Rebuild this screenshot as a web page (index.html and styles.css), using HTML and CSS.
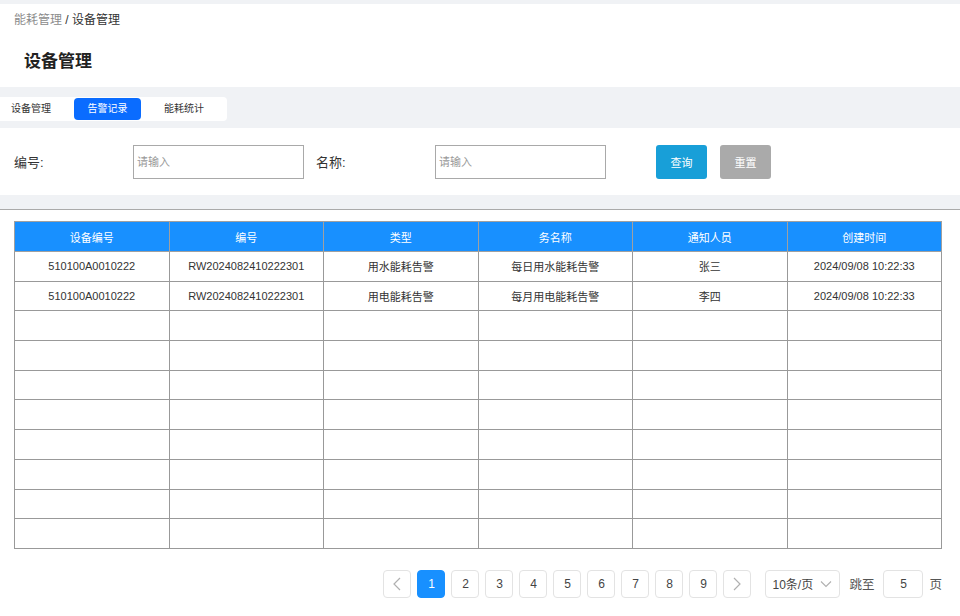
FILE: index.html
```html
<!DOCTYPE html>
<html lang="zh-CN">
<head>
<meta charset="utf-8">
<title>设备管理</title>
<link rel="stylesheet" href="styles.css">
</head>
<body>
<div class="top-strip"></div>
<header class="header">
  <div class="breadcrumb"><span class="crumb-muted">能耗管理</span> / <span class="crumb-current">设备管理</span></div>
  <h1 class="page-title">设备管理</h1>
</header>
<div class="tabs-band">
  <div class="tabs">
    <div class="tab">设备管理</div>
    <div class="tab tab-active">告警记录</div>
    <div class="tab">能耗统计</div>
  </div>
</div>
<div class="filter">
  <label class="filter-label">编号:</label>
  <input class="filter-input" placeholder="请输入">
  <label class="filter-label filter-label-2">名称:</label>
  <input class="filter-input" placeholder="请输入">
  <button class="btn btn-query">查询</button>
  <button class="btn btn-reset">重置</button>
</div>
<div class="gap-band"></div>
<main class="content">
  <table class="grid">
    <thead>
      <tr><th>设备编号</th><th>编号</th><th>类型</th><th>务名称</th><th>通知人员</th><th>创建时间</th></tr>
    </thead>
    <tbody>
      <tr><td>510100A0010222</td><td>RW2024082410222301</td><td>用水能耗告警</td><td>每日用水能耗告警</td><td>张三</td><td>2024/09/08 10:22:33</td></tr>
      <tr><td>510100A0010222</td><td>RW2024082410222301</td><td>用电能耗告警</td><td>每月用电能耗告警</td><td>李四</td><td>2024/09/08 10:22:33</td></tr>
      <tr><td></td><td></td><td></td><td></td><td></td><td></td></tr>
      <tr><td></td><td></td><td></td><td></td><td></td><td></td></tr>
      <tr><td></td><td></td><td></td><td></td><td></td><td></td></tr>
      <tr><td></td><td></td><td></td><td></td><td></td><td></td></tr>
      <tr><td></td><td></td><td></td><td></td><td></td><td></td></tr>
      <tr><td></td><td></td><td></td><td></td><td></td><td></td></tr>
      <tr><td></td><td></td><td></td><td></td><td></td><td></td></tr>
      <tr><td></td><td></td><td></td><td></td><td></td><td></td></tr>
    </tbody>
  </table>
  <nav class="pager">
    <button class="pg pg-arrow"><svg width="10" height="14" viewBox="0 0 10 14"><path d="M8 1 L2 7 L8 13" fill="none" stroke="#b0b0b0" stroke-width="1.2"/></svg></button>
    <button class="pg pg-active">1</button>
    <button class="pg">2</button>
    <button class="pg">3</button>
    <button class="pg">4</button>
    <button class="pg">5</button>
    <button class="pg">6</button>
    <button class="pg">7</button>
    <button class="pg">8</button>
    <button class="pg">9</button>
    <button class="pg pg-arrow"><svg width="10" height="14" viewBox="0 0 10 14"><path d="M2 1 L8 7 L2 13" fill="none" stroke="#b0b0b0" stroke-width="1.2"/></svg></button>
    <div class="size-select">10条/页<svg width="12" height="8" viewBox="0 0 12 8"><path d="M1 1.5 L6 6.5 L11 1.5" fill="none" stroke="#b0b0b0" stroke-width="1.1"/></svg></div>
    <span class="jump-text jump-lead">跳至</span>
    <div class="jump-input">5</div>
    <span class="jump-text">页</span>
  </nav>
</main>
</body>
</html>
```
FILE: styles.css
```css
* { box-sizing: border-box; }
html, body { margin: 0; padding: 0; background: #fff; }
body {
  font-family: "Liberation Sans", "Noto Sans CJK SC", sans-serif;
  color: #333;
  width: 960px;
  height: 616px;
  overflow: hidden;
}
.top-strip { height: 4px; background: #f0f2f5; }
.header { height: 83px; background: #fff; padding-top: 9px; }
.breadcrumb { font-size: 12px; line-height: 14px; padding-left: 14px; color: #333; }
.crumb-muted { color: #8c8c8c; }
.crumb-current { color: #333; }
.page-title {
  margin: 24px 0 0 24px;
  font-size: 17px;
  line-height: 22px;
  font-weight: 700;
  color: #222;
}
.tabs-band { height: 41px; background: #f0f2f5; padding-top: 10px; }
.tabs {
  width: 227px;
  height: 24px;
  background: #fff;
  border-radius: 0 4px 4px 0;
  display: flex;
  align-items: center;
}
.tab {
  font-size: 10px;
  color: #333;
  height: 22px;
  line-height: 22px;
  text-align: center;
}
.tab:nth-child(1) { width: 62px; }
.tab:nth-child(2) { width: 67px; margin-left: 12px; }
.tab:nth-child(3) { width: 86px; }
.tab-active { background: #0a6cff; color: #fff; border-radius: 4px; }
.filter {
  height: 67px;
  background: #fff;
  display: flex;
  align-items: center;
  padding-left: 14px;
}
.filter-label { font-size: 13px; color: #333; flex: 0 0 119px; }
.filter-label-2 { margin-left: 12px; }
.filter-input {
  width: 171px;
  height: 34px;
  border: 1px solid #a9a9a9;
  padding: 0 3px;
  font-family: "Liberation Sans", "Noto Sans CJK SC", sans-serif;
  font-size: 11px;
  outline: none;
}
.filter-input::placeholder { color: #999; }
.btn {
  width: 51px;
  height: 34px;
  border: 0;
  border-radius: 3px;
  color: #fff;
  font-size: 11px;
  font-family: "Liberation Sans", "Noto Sans CJK SC", sans-serif;
}
.btn-query { background: #189fd8; margin-left: 50px; }
.btn-reset { background: #aaaaaa; margin-left: 13px; }
.gap-band { height: 15px; background: #f0f2f5; border-bottom: 1px solid #aaa; }
.content { padding: 11px 0 0 14px; }
.grid {
  width: 928px;
  border-collapse: collapse;
  table-layout: fixed;
  font-size: 11px;
  color: #333;
}
.grid th {
  background: #1890ff;
  color: #fff;
  font-weight: 400;
  height: 30px;
  border: 1px solid #a0a0a0;
  text-align: center;
  padding: 0;
}
.grid td {
  height: 29.7px;
  border: 1px solid #999;
  text-align: center;
  padding: 0;
}
.pager {
  display: flex;
  justify-content: flex-end;
  align-items: center;
  margin-top: 21px;
  padding-right: 18px;
  gap: 6px;
}
.pg {
  width: 28px;
  height: 28px;
  border: 1px solid #e3e3e3;
  border-radius: 4px;
  background: #fff;
  color: #444;
  font-size: 12px;
  font-family: "Liberation Sans", "Noto Sans CJK SC", sans-serif;
  padding: 0;
  display: flex;
  align-items: center;
  justify-content: center;
}
.pg-active { background: #1890ff; border-color: #1890ff; color: #fff; }
.size-select {
  width: 75px;
  height: 28px;
  border: 1px solid #e3e3e3;
  border-radius: 4px;
  font-size: 12px;
  color: #444;
  display: flex;
  align-items: center;
  justify-content: space-between;
  padding: 0 7px 0 6px;
  margin-left: 8px;
}
.jump-text { font-size: 12.5px; color: #555; }
.jump-lead { margin-left: 3px; }
.jump-input {
  width: 40px;
  height: 28px;
  border: 1px solid #e3e3e3;
  border-radius: 4px;
  font-size: 12px;
  color: #444;
  display: flex;
  align-items: center;
  justify-content: center;
  margin-left: 3px;
}
```
